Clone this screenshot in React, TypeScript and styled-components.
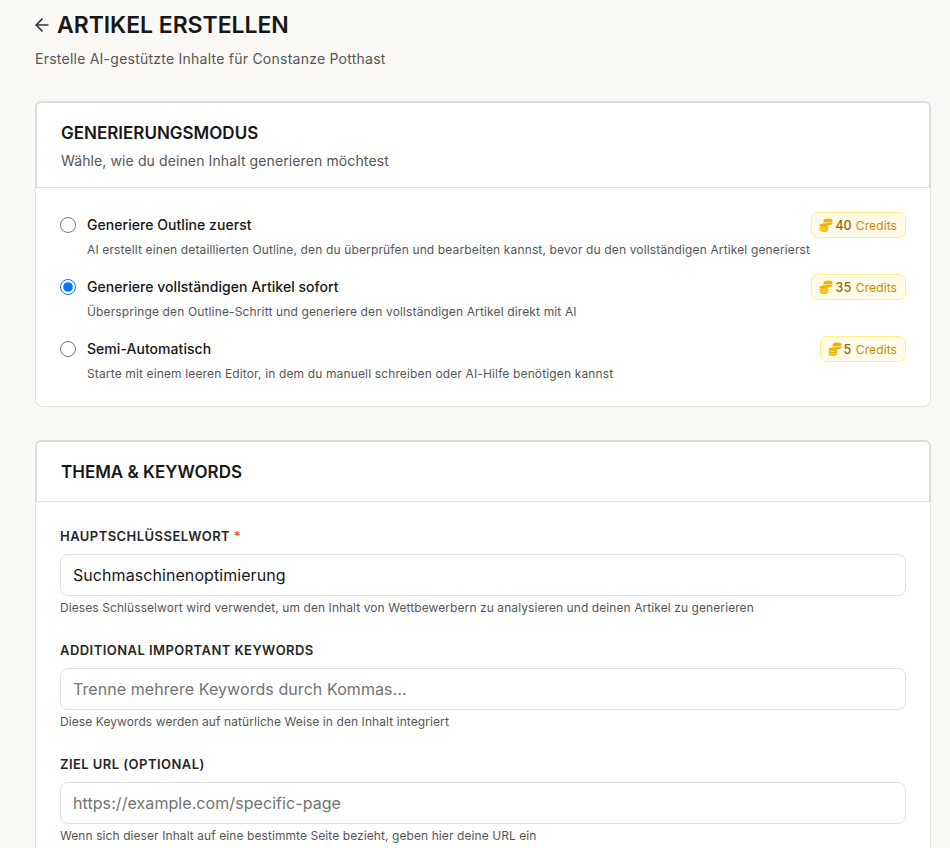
import { createGlobalStyle, styled } from "styled-components";
import { ArrowLeft } from "lucide-react";

const GlobalStyle = createGlobalStyle`
  html, body {
    margin: 0;
    height: 848px;
    overflow: hidden;
    background: #faf8f5;
    font-family: "Inter", "Liberation Sans", sans-serif;
    color: #171717;
  }
  * { box-sizing: border-box; }
`;

const Page = styled.div`
  padding: 13px 19px 0 35px;
  display: flex;
  flex-direction: column;
`;

const TitleRow = styled.div`
  display: flex;
  align-items: center;
  height: 24px;
  gap: 5px;
  margin-left: -3px;
`;

const BackIcon = styled(ArrowLeft)`
  width: 20px;
  height: 20px;
  color: #333;
`;

const Title = styled.h1`
  margin: 0;
  font-size: 23px;
  line-height: 24px;
  font-weight: 600;
  letter-spacing: -0.05px;
  color: #171717;
`;

const Subtitle = styled.p`
  margin: 12px 0 0;
  font-size: 14px;
  line-height: 20px;
  letter-spacing: 0.24px;
  color: #555;
`;

const Card = styled.section<{ $first?: boolean }>`
  margin-top: ${(p) => (p.$first ? "32px" : "33px")};
  background: #fff;
  border: 1px solid #e2e2e0;
  border-top: 0;
  border-radius: 8px;
`;

const CardHeader = styled.header<{ $tall?: boolean }>`
  height: ${(p) => (p.$tall ? "87px" : "62px")};
  margin: 0 -1px;
  padding: 20px 24px 0 24px;
  border: 2px solid #dcdcda;
  border-bottom: 1px solid #e2e2e0;
  border-radius: 6px 6px 0 0;
`;

const CardTitle = styled.h2`
  margin: 0;
  font-size: 17px;
  line-height: 20px;
  font-weight: 600;
  color: #171717;
`;

const CardHint = styled.p`
  margin: 8px 0 0;
  font-size: 14px;
  line-height: 20px;
  letter-spacing: 0.11px;
  color: #555;
`;

const OptionList = styled.div`
  padding: 24px;
  display: flex;
  flex-direction: column;
  gap: 16px;
`;

const Option = styled.div`
  display: grid;
  grid-template-columns: 16px 1fr auto;
  column-gap: 11px;
  align-items: center;
`;

const Radio = styled.input`
  width: 16px;
  height: 16px;
  margin: 0;
`;

const OptionLabel = styled.span`
  font-size: 14px;
  line-height: 20px;
  font-weight: 500;
  letter-spacing: 0.05px;
  color: #171717;
`;

const Badge = styled.span`
  display: inline-flex;
  align-items: center;
  gap: 4px;
  height: 26px;
  padding: 0 8px 0 7px;
  background: #fefce8;
  border: 1px solid #fef08a;
  border-radius: 7px;
  font-size: 12px;
  letter-spacing: 0.1px;
  color: #ca8a04;
`;

const BadgeAmount = styled.span`
  margin-left: -2px;
  font-weight: 500;
  font-size: 12.5px;
  font-variant-numeric: tabular-nums;
  color: #a16207;
`;

const OptionText = styled.p`
  grid-column: 2 / 4;
  margin: 4px 0 0;
  font-size: 12px;
  line-height: 16px;
  letter-spacing: 0.14px;
  color: #555;
`;

const Fields = styled.div`
  padding: 24px 24px 40px 24px;
  display: flex;
  flex-direction: column;
  gap: 24px;
`;

const Field = styled.div`
  display: flex;
  flex-direction: column;
`;

const Label = styled.label`
  font-size: 13px;
  line-height: 20px;
  font-weight: 600;
  letter-spacing: 0.45px;
  color: #262626;
`;

const Required = styled.span`
  color: #ef4444;
`;

const Input = styled.input`
  margin-top: 8px;
  height: 42px;
  padding: 0 12px;
  border: 1px solid #e2e2e0;
  border-radius: 8px;
  background: #fff;
  font-family: inherit;
  font-size: 16px;
  letter-spacing: 0.07px;
  color: #171717;
  outline: none;
  &::placeholder { color: #737373; }
`;

const FieldHint = styled.p`
  margin: 4px 0 0;
  font-size: 12px;
  line-height: 16px;
  letter-spacing: 0.08px;
  color: #555;
`;

const CoinStack = () => (
  <svg width="14" height="14" viewBox="0 0 14 14" fill="#eab308">
    <ellipse cx="9" cy="2.600" rx="4.500" ry="2" />
    <path d="M13.500 4v1.300c0 1-1.800 1.800-4 1.900-.4-.7-1.300-1.100-2.400-1.400-1-.2-1.900-.3-2.600-.1V4c1 .8 2.700 1.100 4.500 1.100s3.500-.3 4.500-1.100z" />
    <ellipse cx="5" cy="7.300" rx="4.500" ry="1.800" />
    <path d="M.5 8.600c1 .8 2.700 1.100 4.500 1.100s3.500-.3 4.500-1.100v1.100c0 1-2 1.800-4.500 1.800S.5 10.700.5 9.700z" />
    <path d="M.5 11.100c1 .8 2.700 1.100 4.500 1.100s3.500-.3 4.500-1.100v.9c0 1-2 1.800-4.500 1.800S.5 13 .5 12z" />
  </svg>
);

const modes = [
  { label: "Generiere Outline zuerst", credits: 40, checked: false, text: "AI erstellt einen detaillierten Outline, den du überprüfen und bearbeiten kannst, bevor du den vollständigen Artikel generierst" },
  { label: "Generiere vollständigen Artikel sofort", credits: 35, checked: true, text: "Überspringe den Outline-Schritt und generiere den vollständigen Artikel direkt mit AI" },
  { label: "Semi-Automatisch", credits: 5, checked: false, text: "Starte mit einem leeren Editor, in dem du manuell schreiben oder AI-Hilfe benötigen kannst" },
];

export default function App() {
  return (
    <Page>
      <GlobalStyle />
      <TitleRow>
        <BackIcon />
        <Title>ARTIKEL ERSTELLEN</Title>
      </TitleRow>
      <Subtitle>Erstelle AI-gestützte Inhalte für Constanze Potthast</Subtitle>

      <Card $first>
        <CardHeader $tall>
          <CardTitle>GENERIERUNGSMODUS</CardTitle>
          <CardHint>Wähle, wie du deinen Inhalt generieren möchtest</CardHint>
        </CardHeader>
        <OptionList>
          {modes.map((m) => (
            <Option key={m.label}>
              <Radio type="radio" name="mode" defaultChecked={m.checked} />
              <OptionLabel>{m.label}</OptionLabel>
              <Badge>
                <CoinStack />
                <BadgeAmount>{m.credits}</BadgeAmount> Credits
              </Badge>
              <OptionText>{m.text}</OptionText>
            </Option>
          ))}
        </OptionList>
      </Card>

      <Card>
        <CardHeader>
          <CardTitle>THEMA &amp; KEYWORDS</CardTitle>
        </CardHeader>
        <Fields>
          <Field>
            <Label>HAUPTSCHLÜSSELWORT <Required>*</Required></Label>
            <Input defaultValue="Suchmaschinenoptimierung" />
            <FieldHint>Dieses Schlüsselwort wird verwendet, um den Inhalt von Wettbewerbern zu analysieren und deinen Artikel zu generieren</FieldHint>
          </Field>
          <Field>
            <Label>ADDITIONAL IMPORTANT KEYWORDS</Label>
            <Input placeholder="Trenne mehrere Keywords durch Kommas..." />
            <FieldHint>Diese Keywords werden auf natürliche Weise in den Inhalt integriert</FieldHint>
          </Field>
          <Field>
            <Label>ZIEL URL (OPTIONAL)</Label>
            <Input placeholder="https://example.com/specific-page" />
            <FieldHint>Wenn sich dieser Inhalt auf eine bestimmte Seite bezieht, geben hier deine URL ein</FieldHint>
          </Field>
        </Fields>
      </Card>
    </Page>
  );
}
